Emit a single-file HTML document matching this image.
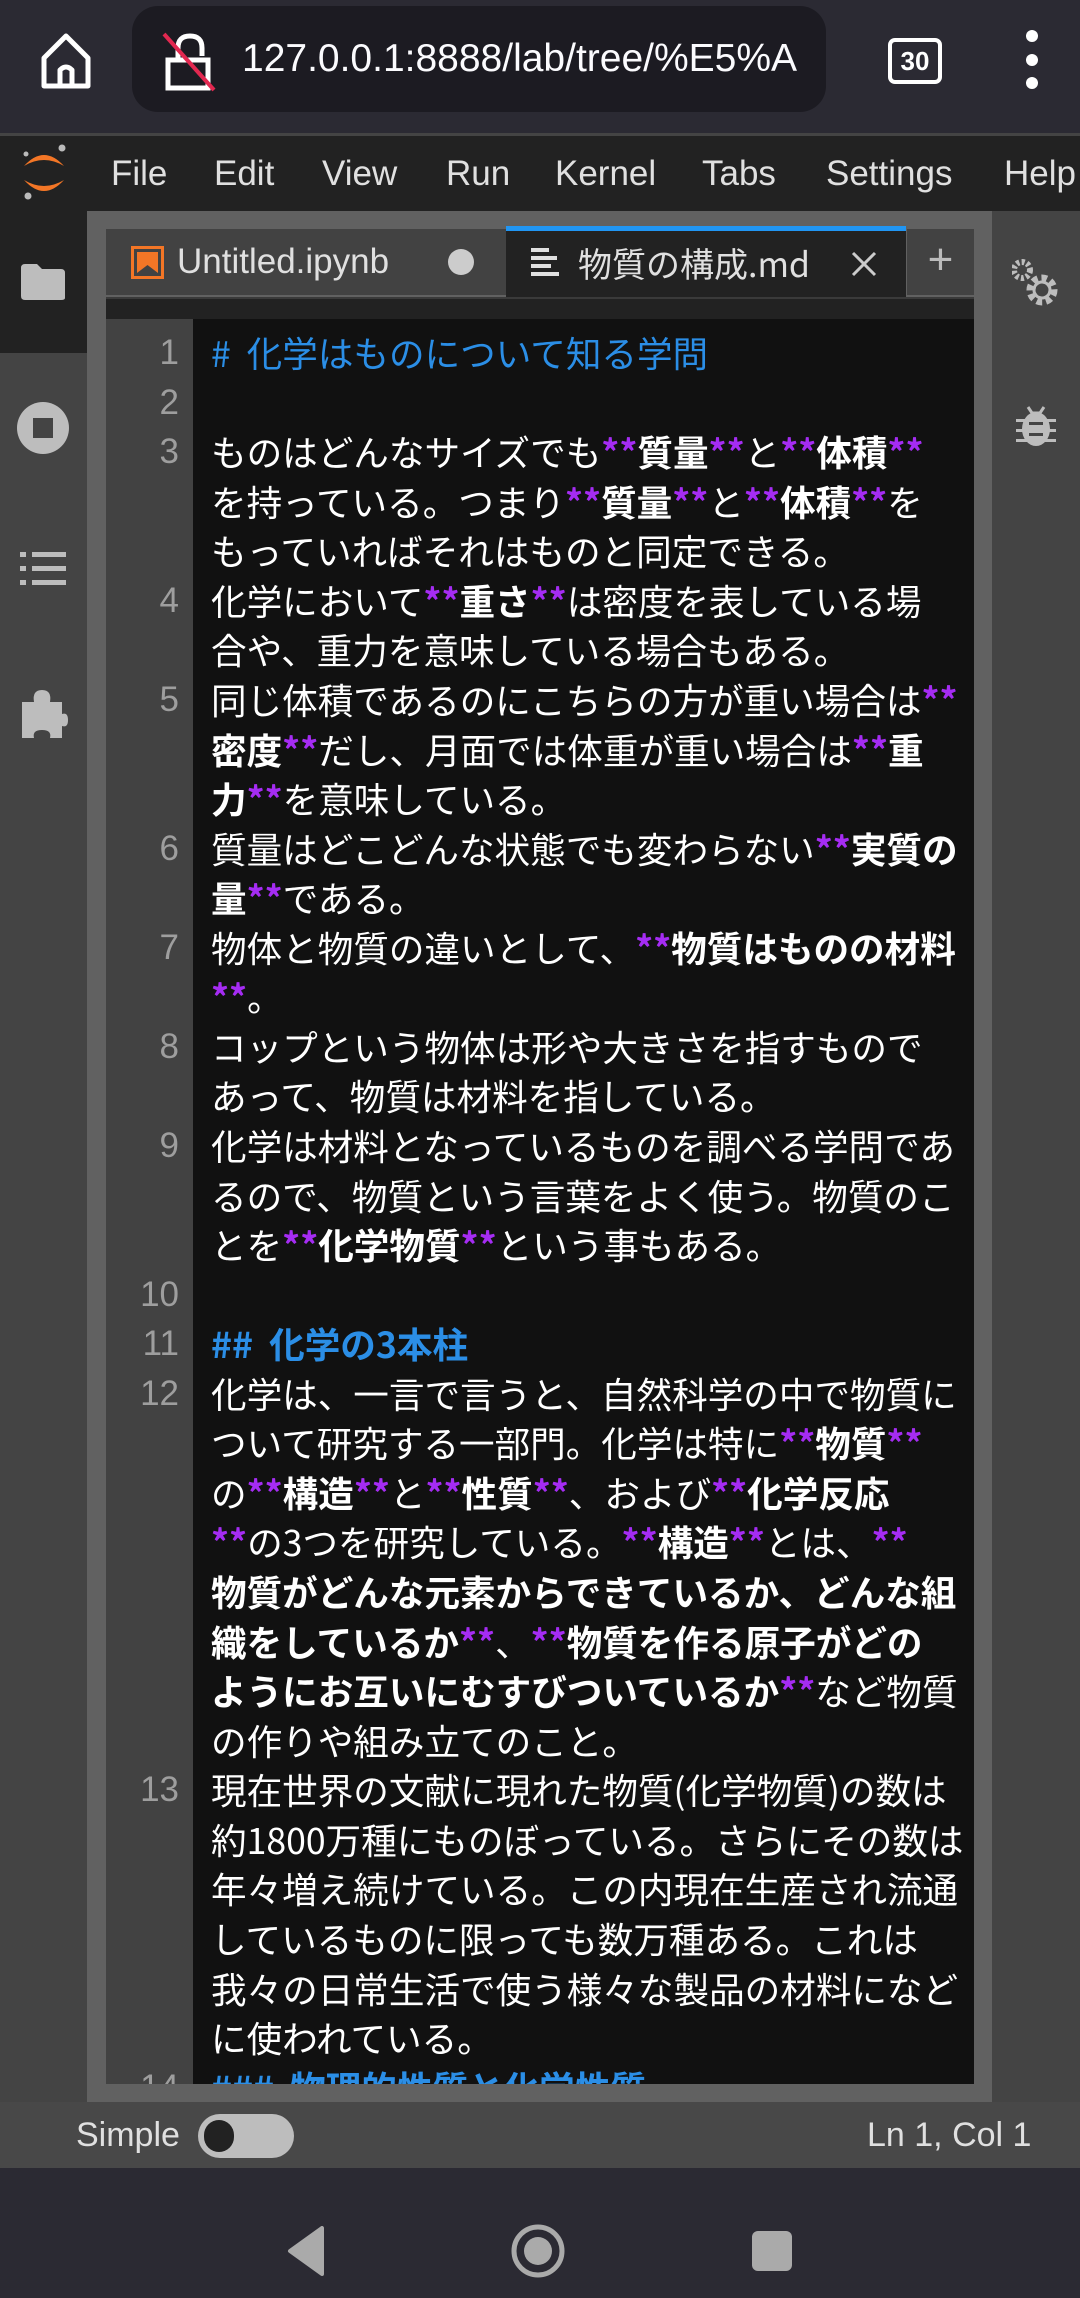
<!DOCTYPE html>
<html><head><meta charset="utf-8">
<style>
*{margin:0;padding:0;box-sizing:border-box}
body{width:1080px;height:2298px;background:#2b2a33;position:relative;overflow:hidden;font-family:"Liberation Sans","Noto Sans CJK JP",sans-serif}
.abs{position:absolute}
#top{left:0;top:0;width:1080px;height:135px;background:#2b2a33}
#url{left:132px;top:6px;width:694px;height:106px;background:#1c1b22;border-radius:26px;color:#fbfbfe;font-size:39px;line-height:106px;padding-left:110px;white-space:nowrap;overflow:hidden}
#menu{left:0;top:136px;width:1080px;height:75px;background:#222;color:#e0e0e0;font-size:35px;line-height:75px;overflow:hidden}
#menu span{position:absolute;top:0}
#lside{left:0;top:211px;width:87px;height:1891px;background:#444}
#rside{left:992px;top:211px;width:88px;height:1891px;background:#444}
#panel{left:87px;top:211px;width:905px;height:1891px;background:#616161}
#tab1{left:106px;top:229px;width:400px;height:66px;background:#424242;color:#e0e0e0;font-size:35px;line-height:66px}
#tab2{left:506px;top:226px;width:400px;height:71px;background:#222;border-top:5px solid #2196f3;color:#e0e0e0;font-size:35px;line-height:64px}
#tab3{left:907px;top:229px;width:67px;height:66px;background:#424242;color:#bbb;font-size:44px;line-height:62px;text-align:center}
#tool{left:106px;top:297px;width:868px;height:22px;background:#222;border-top:2px solid #3a3a3a}
#ed{left:106px;top:319px;width:868px;height:1765px;background:#111;overflow:hidden}
#gut{left:0;top:0;width:87px;height:1765px;background:#424242}
.ln{position:absolute;left:0;width:868px;height:49.56px;line-height:49.56px;font-family:"Noto Sans CJK JP",sans-serif;font-size:35.6px;color:#fff;white-space:nowrap}
.ln .n{position:absolute;left:0;width:73px;text-align:right;color:#9e9e9e;font-family:"Liberation Sans",sans-serif;font-size:35px}
.ln .t{position:absolute;left:105px}
.h{color:#2b8ee6}
.a{color:#a52cf3;font-weight:bold}
b{font-weight:bold}
#status{left:0;top:2102px;width:1080px;height:66px;background:#484848;color:#e0e0e0;font-size:34px;line-height:66px}
#nav{left:0;top:2168px;width:1080px;height:130px;background:#2b2a33}
</style></head><body>
<div id="top" class="abs">
<svg class="abs" style="left:40px;top:30px" width="52" height="60" viewBox="0 0 52 60"><path d="M4 28 L26 6 L48 28 V56 H4 Z M20 56 V40 Q26 34 32 40 V56" fill="none" stroke="#fff" stroke-width="5" stroke-linejoin="round"/></svg>
</div>
<div id="url" class="abs">127.0.0.1:8888/lab/tree/%E5%A</div>
<svg class="abs" style="left:162px;top:30px" width="56" height="62" viewBox="0 0 56 62"><path d="M16 30 V18 Q16 6 28 6 Q40 6 40 18 V26 M6 30 H46 V58 H6 Z" fill="none" stroke="#fff" stroke-width="5"/><path d="M2 4 L52 60" stroke="#e22850" stroke-width="4"/></svg>
<div class="abs" style="left:888px;top:38px;width:54px;height:46px;border:4px solid #fff;border-radius:7px;color:#fff;font-size:26px;font-weight:bold;text-align:center;line-height:38px">30</div>
<div class="abs" style="left:1026px;top:30px;width:12px;height:12px;border-radius:6px;background:#fff"></div>
<div class="abs" style="left:1026px;top:54px;width:12px;height:12px;border-radius:6px;background:#fff"></div>
<div class="abs" style="left:1026px;top:77px;width:12px;height:12px;border-radius:6px;background:#fff"></div>
<div class="abs" style="left:0;top:133px;width:1080px;height:3px;background:#444"></div>
<div id="menu" class="abs">
<svg class="abs" style="left:18px;top:6px" width="52" height="62" viewBox="0 0 52 62"><path d="M6 24 Q26 2 46 24 Q26 12 6 24Z M6 38 Q26 60 46 38 Q26 50 6 38Z" fill="#f37626"/><circle cx="44" cy="6" r="3.5" fill="#bbb"/><circle cx="8" cy="12" r="2.5" fill="#bbb"/><circle cx="10" cy="54" r="3.5" fill="#bbb"/></svg>
<span style="left:111px">File</span><span style="left:214px">Edit</span><span style="left:322px">View</span><span style="left:446px">Run</span><span style="left:555px">Kernel</span><span style="left:702px">Tabs</span><span style="left:826px">Settings</span><span style="left:1004px">Help</span>
</div>
<div id="lside" class="abs"></div>
<div class="abs" style="left:0;top:211px;width:87px;height:142px;background:#222"></div>
<svg class="abs" style="left:19px;top:262px" width="48" height="40" viewBox="0 0 48 40"><path d="M2 6 Q2 2 6 2 H18 L23 7 H42 Q46 7 46 11 V36 Q46 38 42 38 H6 Q2 38 2 34Z" fill="#bdbdbd"/></svg>
<svg class="abs" style="left:17px;top:402px" width="52" height="52" viewBox="0 0 52 52"><circle cx="26" cy="26" r="26" fill="#bdbdbd"/><rect x="16" y="16" width="20" height="20" fill="#444"/></svg>
<svg class="abs" style="left:20px;top:550px" width="46" height="38" viewBox="0 0 46 38"><g fill="#bdbdbd"><rect x="0" y="2" width="6" height="5"/><rect x="12" y="2" width="34" height="5"/><rect x="0" y="16" width="6" height="5"/><rect x="12" y="16" width="34" height="5"/><rect x="0" y="30" width="6" height="5"/><rect x="12" y="30" width="34" height="5"/></g></svg>
<svg class="abs" style="left:18px;top:688px" width="50" height="52" viewBox="0 0 50 52"><path d="M4 14 H16 Q14 2 24 2 Q34 2 32 14 H44 V26 Q50 24 50 32 Q50 40 44 38 V50 H32 Q34 42 24 42 Q14 42 16 50 H4 Z" fill="#bdbdbd"/></svg>
<div id="rside" class="abs"></div>
<svg class="abs" style="left:1012px;top:258px" width="48" height="50" viewBox="0 0 48 50"><circle cx="10" cy="12" r="8" fill="none" stroke="#bdbdbd" stroke-width="6" stroke-dasharray="3 2.3"/><circle cx="30" cy="32" r="11" fill="none" stroke="#bdbdbd" stroke-width="9" stroke-dasharray="5 3.5"/><circle cx="30" cy="32" r="8" fill="none" stroke="#bdbdbd" stroke-width="3"/></svg>
<svg class="abs" style="left:1016px;top:405px" width="40" height="42" viewBox="0 0 40 42"><path d="M12 2 L16 8 H24 L28 2" stroke="#bdbdbd" stroke-width="3" fill="none"/><ellipse cx="20" cy="24" rx="14" ry="17" fill="#bdbdbd"/><g fill="#bdbdbd"><rect x="0" y="14" width="40" height="3"/><rect x="0" y="24" width="40" height="3"/><rect x="0" y="34" width="40" height="3"/></g><rect x="13" y="17" width="14" height="3" fill="#444"/><rect x="13" y="28" width="14" height="3" fill="#444"/></svg>
<div id="panel" class="abs"></div>
<div id="tab1" class="abs"><svg class="abs" style="left:25px;top:17px" width="33" height="33" viewBox="0 0 33 33"><rect x="1.5" y="1.5" width="30" height="30" fill="none" stroke="#f37626" stroke-width="3"/><path d="M6 6 H27 V27 L16.5 19 L6 27Z" fill="#f37626"/></svg><span class="abs" style="left:71px">Untitled.ipynb</span><div class="abs" style="left:342px;top:20px;width:26px;height:26px;border-radius:13px;background:#ccc"></div></div>
<div id="tab2" class="abs"><svg class="abs" style="left:25px;top:16px" width="30" height="30" viewBox="0 0 30 30"><g fill="#e0e0e0"><rect x="0" y="1" width="18" height="4"/><rect x="0" y="9" width="26" height="4"/><rect x="0" y="17" width="20" height="4"/><rect x="0" y="25" width="28" height="4"/></g></svg><span class="abs" style="left:72px;font-family:'Noto Sans CJK JP',sans-serif;font-size:34px">物質の構成.md</span><svg class="abs" style="left:345px;top:20px" width="26" height="26" viewBox="0 0 26 26"><path d="M2 2 L24 24 M24 2 L2 24" stroke="#ccc" stroke-width="3"/></svg></div>
<div id="tab3" class="abs">+</div>
<div id="tool" class="abs"></div>
<div id="ed" class="abs"><div id="gut" class="abs"></div>
<div class="ln" style="top:9px"><span class="n">1</span><span class="t h">#&nbsp; 化学はものについて知る学問</span></div>
<div class="ln" style="top:58.6px"><span class="n">2</span></div>
<div class="ln" style="top:108.1px"><span class="n">3</span><span class="t">ものはどんなサイズでも<span class="a">**</span><b>質量</b><span class="a">**</span>と<span class="a">**</span><b>体積</b><span class="a">**</span></span></div>
<div class="ln" style="top:157.7px"><span class="t">を持っている。つまり<span class="a">**</span><b>質量</b><span class="a">**</span>と<span class="a">**</span><b>体積</b><span class="a">**</span>を</span></div>
<div class="ln" style="top:207.2px"><span class="t">もっていればそれはものと同定できる。</span></div>
<div class="ln" style="top:256.8px"><span class="n">4</span><span class="t">化学において<span class="a">**</span><b>重さ</b><span class="a">**</span>は密度を表している場</span></div>
<div class="ln" style="top:306.4px"><span class="t">合や、重力を意味している場合もある。</span></div>
<div class="ln" style="top:355.9px"><span class="n">5</span><span class="t">同じ体積であるのにこちらの方が重い場合は<span class="a">**</span></span></div>
<div class="ln" style="top:405.5px"><span class="t"><b>密度</b><span class="a">**</span>だし、月面では体重が重い場合は<span class="a">**</span><b>重</b></span></div>
<div class="ln" style="top:455px"><span class="t"><b>力</b><span class="a">**</span>を意味している。</span></div>
<div class="ln" style="top:504.6px"><span class="n">6</span><span class="t">質量はどこどんな状態でも変わらない<span class="a">**</span><b>実質の</b></span></div>
<div class="ln" style="top:554.2px"><span class="t"><b>量</b><span class="a">**</span>である。</span></div>
<div class="ln" style="top:603.7px"><span class="n">7</span><span class="t">物体と物質の違いとして、<span class="a">**</span><b>物質はものの材料</b></span></div>
<div class="ln" style="top:653.3px"><span class="t"><span class="a">**</span>。</span></div>
<div class="ln" style="top:702.8px"><span class="n">8</span><span class="t">コップという物体は形や大きさを指すもので</span></div>
<div class="ln" style="top:752.4px"><span class="t">あって、物質は材料を指している。</span></div>
<div class="ln" style="top:802px"><span class="n">9</span><span class="t">化学は材料となっているものを調べる学問であ</span></div>
<div class="ln" style="top:851.5px"><span class="t">るので、物質という言葉をよく使う。物質のこ</span></div>
<div class="ln" style="top:901.1px"><span class="t">とを<span class="a">**</span><b>化学物質</b><span class="a">**</span>という事もある。</span></div>
<div class="ln" style="top:950.6px"><span class="n">10</span></div>
<div class="ln" style="top:1000.2px"><span class="n">11</span><span class="t h"><b>##&nbsp; 化学の3本柱</b></span></div>
<div class="ln" style="top:1049.8px"><span class="n">12</span><span class="t">化学は、一言で言うと、自然科学の中で物質に</span></div>
<div class="ln" style="top:1099.3px"><span class="t">ついて研究する一部門。化学は特に<span class="a">**</span><b>物質</b><span class="a">**</span></span></div>
<div class="ln" style="top:1148.9px"><span class="t">の<span class="a">**</span><b>構造</b><span class="a">**</span>と<span class="a">**</span><b>性質</b><span class="a">**</span>、および<span class="a">**</span><b>化学反応</b></span></div>
<div class="ln" style="top:1198.4px"><span class="t"><span class="a">**</span>の3つを研究している。<span class="a">**</span><b>構造</b><span class="a">**</span>とは、<span class="a">**</span></span></div>
<div class="ln" style="top:1248px"><span class="t"><b>物質がどんな元素からできているか、どんな組</b></span></div>
<div class="ln" style="top:1297.6px"><span class="t"><b>織をしているか</b><span class="a">**</span>、<span class="a">**</span><b>物質を作る原子がどの</b></span></div>
<div class="ln" style="top:1347.1px"><span class="t"><b>ようにお互いにむすびついているか</b><span class="a">**</span>など物質</span></div>
<div class="ln" style="top:1396.7px"><span class="t">の作りや組み立てのこと。</span></div>
<div class="ln" style="top:1446.2px"><span class="n">13</span><span class="t">現在世界の文献に現れた物質(化学物質)の数は</span></div>
<div class="ln" style="top:1495.8px"><span class="t">約1800万種にものぼっている。さらにその数は</span></div>
<div class="ln" style="top:1545.4px"><span class="t">年々増え続けている。この内現在生産され流通</span></div>
<div class="ln" style="top:1594.9px"><span class="t">しているものに限っても数万種ある。これは</span></div>
<div class="ln" style="top:1644.5px"><span class="t">我々の日常生活で使う様々な製品の材料になど</span></div>
<div class="ln" style="top:1694px"><span class="t">に使われている。</span></div>
<div class="ln" style="top:1743.6px"><span class="n">14</span><span class="t h"><b>###&nbsp; 物理的性質と化学性質</b></span></div>
</div>
<div id="status" class="abs"><span class="abs" style="left:76px">Simple</span><div class="abs" style="left:198px;top:12px;width:96px;height:44px;border-radius:22px;background:#bdbdbd"></div><div class="abs" style="left:204px;top:18px;width:30px;height:32px;border-radius:16px;background:#222"></div><span class="abs" style="left:867px">Ln 1, Col 1</span></div>
<div id="nav" class="abs">
<svg class="abs" style="left:286px;top:58px" width="40" height="50" viewBox="0 0 40 50"><path d="M36 2 V48 L4 25Z" fill="#aaa" stroke="#aaa" stroke-width="4" stroke-linejoin="round"/></svg>
<svg class="abs" style="left:510px;top:55px" width="56" height="56" viewBox="0 0 56 56"><circle cx="28" cy="28" r="24" fill="none" stroke="#aaa" stroke-width="5"/><circle cx="28" cy="28" r="14" fill="#aaa"/></svg>
<div class="abs" style="left:752px;top:63px;width:40px;height:40px;border-radius:6px;background:#aaa"></div>
</div>
</body></html>
